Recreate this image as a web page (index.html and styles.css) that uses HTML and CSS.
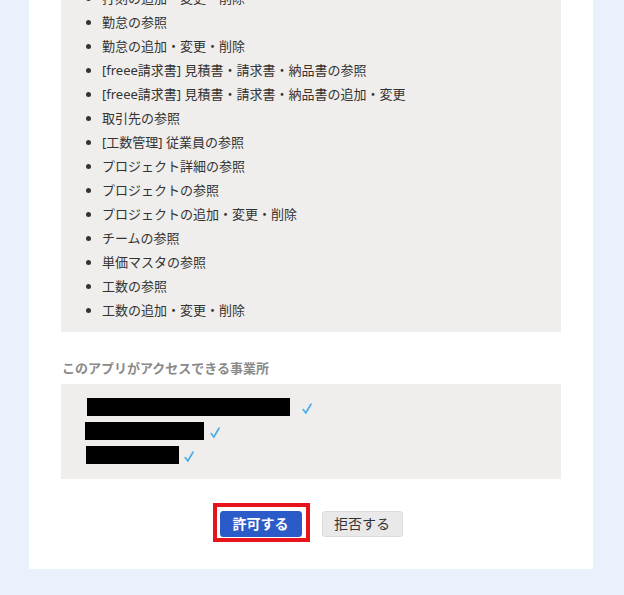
FILE: index.html
```html
<!DOCTYPE html>
<html lang="ja">
<head>
  <meta charset="UTF-8">
  <meta name="viewport" content="width=device-width, initial-scale=1.0">
  <title>アプリ連携の許可</title>
  <link rel="stylesheet" href="styles.css">
</head>
<body>
  <div class="page">
    <div class="card">
      <div class="scope-box">
        <ul class="scope-list">
          <li>打刻の追加・変更・削除</li>
          <li>勤怠の参照</li>
          <li>勤怠の追加・変更・削除</li>
          <li>[freee請求書] 見積書・請求書・納品書の参照</li>
          <li>[freee請求書] 見積書・請求書・納品書の追加・変更</li>
          <li>取引先の参照</li>
          <li>[工数管理] 従業員の参照</li>
          <li>プロジェクト詳細の参照</li>
          <li>プロジェクトの参照</li>
          <li>プロジェクトの追加・変更・削除</li>
          <li>チームの参照</li>
          <li>単価マスタの参照</li>
          <li>工数の参照</li>
          <li>工数の追加・変更・削除</li>
        </ul>
      </div>

      <h2 class="section-title">このアプリがアクセスできる事業所</h2>
      <div class="company-box">
        <div class="company-row">
          <span class="redacted redacted-lg"></span>
          <svg class="check check-lg" width="10" height="11" viewBox="0 0 10 11"><path d="M1.2 6.6 L3.8 10 L9 1.2" fill="none" stroke="#4aaee8" stroke-width="1.7" stroke-linecap="round" stroke-linejoin="round"/></svg>
        </div>
        <div class="company-row">
          <span class="redacted redacted-md"></span>
          <svg class="check check-md" width="10" height="11" viewBox="0 0 10 11"><path d="M1.2 6.6 L3.8 10 L9 1.2" fill="none" stroke="#4aaee8" stroke-width="1.7" stroke-linecap="round" stroke-linejoin="round"/></svg>
        </div>
        <div class="company-row">
          <span class="redacted redacted-sm"></span>
          <svg class="check check-sm" width="10" height="11" viewBox="0 0 10 11"><path d="M1.2 6.6 L3.8 10 L9 1.2" fill="none" stroke="#4aaee8" stroke-width="1.7" stroke-linecap="round" stroke-linejoin="round"/></svg>
        </div>
      </div>

      <div class="actions">
        <span class="highlight">
          <button type="button" class="btn btn-allow">許可する</button>
        </span>
        <button type="button" class="btn btn-deny">拒否する</button>
      </div>
    </div>
  </div>
</body>
</html>
```

FILE: styles.css
```css
body {
  margin: 0;
  padding: 0;
  background: #eaf1fc;
  font-family: "Noto Sans", "Noto Sans CJK JP", sans-serif;
  color: #333;
  overflow: hidden;
}

.page {
  padding: 0 31px 26px 29px;
}

.card {
  margin-top: -56px;
  padding: 32px 32px 32px;
  background: #fff;
}

.scope-box {
  background: #efeeec;
  padding: 10px 0;
}

.scope-list {
  margin: 0;
  padding-left: 41px;
  font-size: 13px;
  line-height: 24px;
}

.section-title {
  margin: 26px 0 6px 1px;
  font-size: 13px;
  line-height: 20px;
  font-weight: bold;
  color: #8a8a8a;
}

.company-box {
  background: #efeeec;
  padding: 11px 0 12px 25px;
}

.company-row {
  display: flex;
  align-items: center;
  height: 24px;
}

.redacted {
  display: inline-block;
  height: 18px;
  background: #000;
}

.redacted-lg {
  width: 203px;
  margin-left: 1px;
}

.redacted-md {
  width: 119px;
  margin-left: -1px;
}

.redacted-sm {
  width: 93px;
}

.check {
  margin-top: 2px;
}

.check-lg {
  margin-left: 12px;
}

.check-md {
  margin-left: 6px;
}

.check-sm {
  margin-left: 5px;
}

.actions {
  display: flex;
  justify-content: center;
  gap: 20px;
  margin-top: 32px;
}

/* red frame drawn over the allow button */
.highlight {
  position: relative;
  display: flex;
}

.highlight::after {
  content: "";
  position: absolute;
  top: -8px;
  left: -7px;
  right: -8px;
  bottom: -5px;
  border: 4px solid #e8141c;
  pointer-events: none;
}

.btn {
  height: 26px;
  padding: 0;
  border-radius: 3px;
  font-family: "Noto Sans", "Noto Sans CJK JP", sans-serif;
  font-size: 14px;
  line-height: 24px;
  white-space: nowrap;
  cursor: pointer;
}

.btn-allow {
  width: 82px;
  background: #2a5bc9;
  border: 1px solid #2a5bc9;
  color: #fff;
  font-weight: bold;
}

.btn-deny {
  width: 81px;
  background: #e9e9e9;
  border: 1px solid #dcdcdc;
  color: #333;
}
```
